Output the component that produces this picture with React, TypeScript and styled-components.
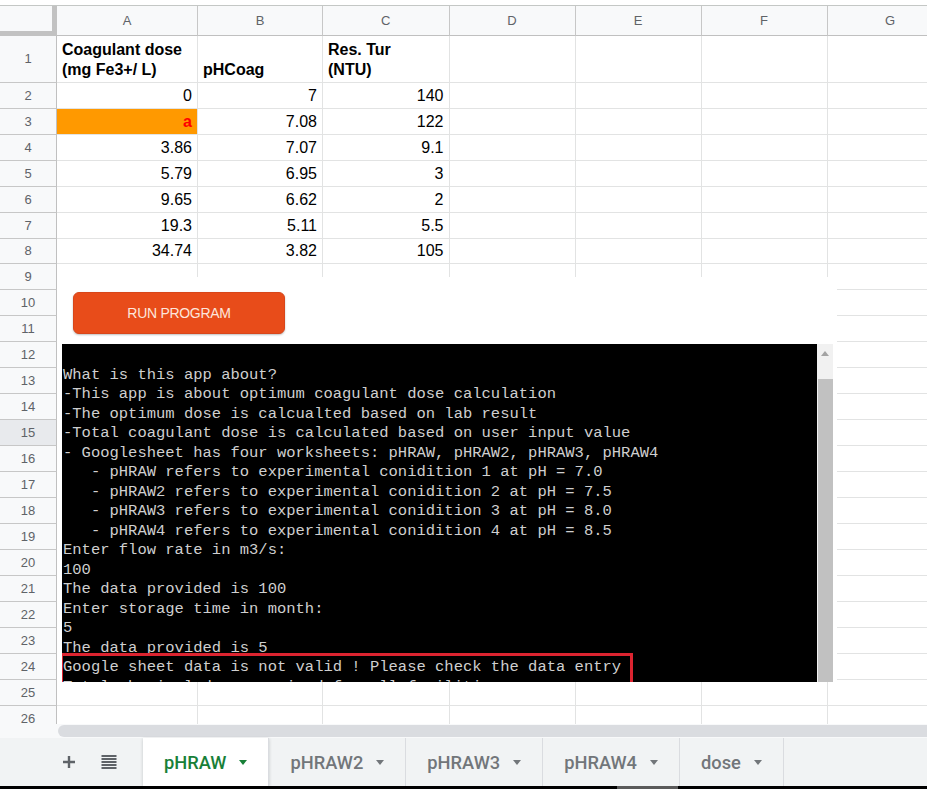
import React from "react";
import styled, { createGlobalStyle } from "styled-components";

const Global = createGlobalStyle`
  html, body { margin: 0; padding: 0; background: #ffffff; }
  body { font-family: "Liberation Sans", Arial, sans-serif; }
  * { box-sizing: border-box; }
`;

const Page = styled.div`
  width: 927px;
  height: 789px;
  overflow: hidden;
  display: flex;
  flex-direction: column;
  background: #fff;
`;

const TopStrip = styled.div`
  height: 5px;
  flex: none;
  background: #fff;
`;

const Sheet = styled.div`
  position: relative;
  height: 719px;
  flex: none;
  overflow: hidden;
  display: grid;
  grid-template-columns: 57px 141px 125px 126.5px 126px 126px 126px 126px;
  grid-template-rows: 30px 46.7px repeat(25, 25.97px);
  border-top: 1px solid #c4c7c5;
`;

const Corner = styled.div`
  background: #f8f9fa;
  border-right: 5px solid #c2c2c2;
  border-bottom: 5px solid #c2c2c2;
`;

const ColHead = styled.div`
  background: #f8f9fa;
  border-right: 1px solid #c7c7c7;
  border-bottom: 1px solid #c0c0c0;
  display: flex;
  align-items: center;
  justify-content: center;
  font-family: "Liberation Sans", Arial, sans-serif;
  font-size: 13px;
  color: #5f6368;
`;

const RowHead = styled.div<{ $hl?: boolean }>`
  background: ${(p) => (p.$hl ? "#e8eaed" : "#f8f9fa")};
  border-right: 1px solid #c0c0c0;
  border-bottom: 1px solid #c7c7c7;
  display: flex;
  align-items: center;
  justify-content: center;
  font-size: 13px;
  color: #5f6368;
`;

const Cell = styled.div<{ $right?: boolean; $bold?: boolean; $fill?: string; $color?: string }>`
  background: ${(p) => p.$fill || "#fff"};
  border-right: 1px solid #e2e3e3;
  border-bottom: 1px solid #e2e3e3;
  display: flex;
  align-items: flex-end;
  justify-content: ${(p) => (p.$right ? "flex-end" : "flex-start")};
  padding: 0 5px 2px 5px;
  font-size: 16px;
  line-height: 20px;
  font-weight: ${(p) => (p.$bold ? 700 : 400)};
  color: ${(p) => p.$color || "#000"};
  white-space: pre;
  overflow: hidden;
`;

/* Floating drawing + embedded console image lying over the grid */
const Overlay = styled.div`
  position: absolute;
  left: 57px;
  top: 271px;
  width: 780px;
  height: 405px;
  background: #fff;
  display: flex;
  flex-direction: column;
`;

const ButtonArea = styled.div`
  height: 67px;
  flex: none;
  padding: 15px 0 0 16px;
`;

const RunButton = styled.div`
  width: 212px;
  height: 42px;
  border-radius: 6px;
  background: #e84c1a;
  border: 1px solid #d8461a;
  box-shadow: 0 1px 2px rgba(0, 0, 0, 0.25);
  display: flex;
  align-items: center;
  justify-content: center;
  font-family: "Liberation Sans", Arial, sans-serif;
  font-size: 14px;
  letter-spacing: -0.3px;
  color: #fde6dc;
`;

const ConsoleWrap = styled.div`
  margin-left: 5px;
  width: 771px;
  height: 338px;
  display: flex;
  position: relative;
  overflow: hidden;
`;

const Console = styled.div`
  flex: 1;
  background: #000;
  padding: 2px 0 0 1px;
  overflow: hidden;
  font-family: "Liberation Mono", "Courier New", monospace;
  font-size: 15.5px;
  line-height: 19.5px;
  color: #cfcfcf;
  white-space: pre;
`;

const Line = styled.div`
  height: 19.5px;
`;

const VScroll = styled.div`
  width: 16px;
  flex: none;
  background: #f1f1f1;
  display: flex;
  flex-direction: column;
  align-items: center;
`;

const ArrowUp = styled.div`
  margin-top: 7px;
  width: 0;
  height: 0;
  border-left: 4px solid transparent;
  border-right: 4px solid transparent;
  border-bottom: 5px solid #a3a3a3;
`;

const Thumb = styled.div`
  margin-top: 23px;
  width: 15px;
  flex: 1;
  background: #c1c1c1;
`;

const RedBox = styled.div`
  position: absolute;
  left: -2px;
  top: 309px;
  width: 573px;
  height: 60px;
  border: 3px solid #dc2430;
  pointer-events: none;
`;

const HScroll = styled.div`
  height: 14px;
  flex: none;
  background: #f8f9fa;
  padding: 1px 0 1px 58px;
  display: flex;
`;

const HThumb = styled.div`
  flex: 1;
  border-radius: 6px 0 0 6px;
  background: #dadce0;
`;

const TabBar = styled.div`
  height: 48px;
  flex: none;
  background: #f1f3f4;
  display: flex;
  align-items: stretch;
  padding-left: 49px;
`;

const IconButton = styled.div`
  width: 40px;
  display: flex;
  align-items: center;
  justify-content: center;
`;

const Tabs = styled.div`
  display: flex;
  margin-left: 14px;
`;

const Tab = styled.div<{ $active?: boolean }>`
  display: flex;
  align-items: center;
  gap: 13px;
  padding: 0 21px 0 21px;
  background: ${(p) => (p.$active ? "#fff" : "transparent")};
  border-right: 1px solid #dadce0;
  box-shadow: ${(p) => (p.$active ? "0 1px 3px rgba(60,64,67,0.25)" : "none")};
  font-family: Roboto, "Liberation Sans", Arial, sans-serif;
  font-weight: 500;
  font-size: 18.3px;
  color: ${(p) => (p.$active ? "#188038" : "#72767a")};
`;

const Caret = styled.span<{ $active?: boolean }>`
  width: 0;
  height: 0;
  margin-top: 1px;
  border-left: 4.5px solid transparent;
  border-right: 4.5px solid transparent;
  border-top: 5px solid ${(p) => (p.$active ? "#188038" : "#72767a")};
`;

const Footer = styled.div`
  height: 3px;
  flex: none;
  background: #000;
  display: flex;
`;

const FooterMark = styled.div`
  margin-left: 617px;
  width: 61px;
  background: #5a5a5a;
`;

const letters = ["A", "B", "C", "D", "E", "F", "G"];

type CellData = { v: string; right?: boolean; bold?: boolean; fill?: string; color?: string };

const dataRows: CellData[][] = [
  [
    { v: "Coagulant dose\n(mg Fe3+/ L)", bold: true },
    { v: "pHCoag", bold: true },
    { v: "Res. Tur\n(NTU)", bold: true },
  ],
  [{ v: "0", right: true }, { v: "7", right: true }, { v: "140", right: true }],
  [
    { v: "a", right: true, bold: true, fill: "#ff9900", color: "#ff0000" },
    { v: "7.08", right: true },
    { v: "122", right: true },
  ],
  [{ v: "3.86", right: true }, { v: "7.07", right: true }, { v: "9.1", right: true }],
  [{ v: "5.79", right: true }, { v: "6.95", right: true }, { v: "3", right: true }],
  [{ v: "9.65", right: true }, { v: "6.62", right: true }, { v: "2", right: true }],
  [{ v: "19.3", right: true }, { v: "5.11", right: true }, { v: "5.5", right: true }],
  [{ v: "34.74", right: true }, { v: "3.82", right: true }, { v: "105", right: true }],
];

const consoleLines = [
  "",
  "What is this app about?",
  "-This app is about optimum coagulant dose calculation",
  "-The optimum dose is calcualted based on lab result",
  "-Total coagulant dose is calculated based on user input value",
  "- Googlesheet has four worksheets: pHRAW, pHRAW2, pHRAW3, pHRAW4",
  "   - pHRAW refers to experimental conidition 1 at pH = 7.0",
  "   - pHRAW2 refers to experimental conidition 2 at pH = 7.5",
  "   - pHRAW3 refers to experimental conidition 3 at pH = 8.0",
  "   - pHRAW4 refers to experimental conidition 4 at pH = 8.5",
  "Enter flow rate in m3/s:",
  "100",
  "The data provided is 100",
  "Enter storage time in month:",
  "5",
  "The data provided is 5",
  "Google sheet data is not valid ! Please check the data entry",
  "Total chemical dose required for all facilities",
];

const tabs = ["pHRAW", "pHRAW2", "pHRAW3", "pHRAW4", "dose"];

const PlusIcon = () => (
  <svg width="14" height="14" viewBox="0 0 14 14">
    <path d="M7 1v12M1 7h12" stroke="#5f6368" strokeWidth="2.4" />
  </svg>
);

const SheetsListIcon = () => (
  <svg width="16" height="15" viewBox="0 0 16 15">
    {[1, 4, 7, 10, 13].map((y) => (
      <rect key={y} x="0.5" y={y - 1} width="15" height="2" fill="#5f6368" />
    ))}
  </svg>
);

export default function App() {
  const cells: React.ReactNode[] = [];
  cells.push(<Corner key="corner" />);
  letters.forEach((l) => cells.push(<ColHead key={"h" + l}>{l}</ColHead>));
  for (let r = 1; r <= 26; r++) {
    cells.push(
      <RowHead key={"r" + r} $hl={r === 15}>
        {r}
      </RowHead>
    );
    const row = dataRows[r - 1];
    for (let c = 0; c < 7; c++) {
      const d = row && row[c];
      cells.push(
        <Cell
          key={`c${r}-${c}`}
          $right={d?.right}
          $bold={d?.bold}
          $fill={d?.fill}
          $color={d?.color}
        >
          {d ? d.v : ""}
        </Cell>
      );
    }
  }

  return (
    <Page>
      <Global />
      <TopStrip />
      <Sheet>
        {cells}
        <Overlay>
          <ButtonArea>
            <RunButton>RUN PROGRAM</RunButton>
          </ButtonArea>
          <ConsoleWrap>
            <Console>
              {consoleLines.map((l, i) => (
                <Line key={i}>{l}</Line>
              ))}
            </Console>
            <VScroll>
              <ArrowUp />
              <Thumb />
            </VScroll>
            <RedBox />
          </ConsoleWrap>
        </Overlay>
      </Sheet>
      <HScroll>
        <HThumb />
      </HScroll>
      <TabBar>
        <IconButton>
          <PlusIcon />
        </IconButton>
        <IconButton>
          <SheetsListIcon />
        </IconButton>
        <Tabs>
          {tabs.map((t, i) => (
            <Tab key={t} $active={i === 0}>
              {t}
              <Caret $active={i === 0} />
            </Tab>
          ))}
        </Tabs>
      </TabBar>
      <Footer>
        <FooterMark />
      </Footer>
    </Page>
  );
}
